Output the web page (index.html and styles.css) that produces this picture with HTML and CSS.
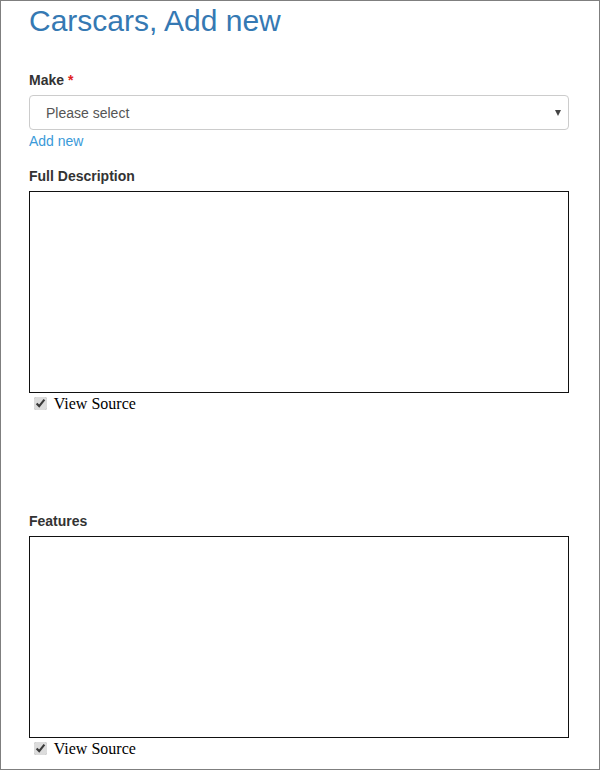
FILE: index.html
```html
<!DOCTYPE html>
<html lang="en">
<head>
    <meta charset="UTF-8">
    <meta name="viewport" content="width=device-width, initial-scale=1.0">
    <title>Carscars, Add new</title>
    <link rel="stylesheet" href="styles.css">
</head>
<body>
    <div class="page">
        <h1>Carscars, Add new</h1>
        <form class="edit-form">
            <div class="form-group">
                <label for="make">Make <span class="required">*</span></label>
                <div class="select-wrap">
                    <select id="make" class="form-control">
                        <option>Please select</option>
                    </select>
                </div>
                <a href="#" class="add-link">Add new</a>
            </div>
            <div class="form-group editor">
                <label for="full-description">Full Description</label>
                <textarea id="full-description" class="source-area"></textarea>
                <div class="view-source">
                    <input type="checkbox" checked> View Source
                </div>
            </div>
            <div class="form-group editor">
                <label for="features">Features</label>
                <textarea id="features" class="source-area"></textarea>
                <div class="view-source">
                    <input type="checkbox" checked> View Source
                </div>
            </div>
        </form>
    </div>
</body>
</html>
```

FILE: styles.css
```css
html, body {
    margin: 0;
    padding: 0;
}
body {
    font-family: "Liberation Sans", Arial, sans-serif;
    font-size: 14px;
    line-height: 20px;
    color: #333;
    background: #fff;
}
.page {
    box-sizing: border-box;
    width: 600px;
    height: 770px;
    border: 1px solid #7f7f7f;
    padding: 0 30px 0 28px;
    overflow: hidden;
}
h1 {
    font-size: 30px;
    font-weight: normal;
    line-height: 33px;
    color: #3579b3;
    margin: 3px 0 33px;
}
.form-group {
    margin-bottom: 15px;
}
label {
    display: block;
    font-weight: bold;
    margin-bottom: 5px;
}
.required {
    color: #e02020;
}
.select-wrap {
    position: relative;
}
.select-wrap::after {
    content: "";
    position: absolute;
    right: 8px;
    top: 15px;
    border-left: 3.5px solid transparent;
    border-right: 3.5px solid transparent;
    border-top: 6px solid #444;
}
.form-control {
    display: block;
    box-sizing: border-box;
    width: 540px;
    height: 35px;
    padding: 6px 16px;
    font-family: inherit;
    font-size: 14px;
    color: #555;
    background: #fff;
    border: 1px solid #ccc;
    border-radius: 4px;
    appearance: none;
    -webkit-appearance: none;
}
.add-link {
    display: block;
    color: #3a9ad9;
    text-decoration: none;
    margin-top: 1px;
}
.source-area {
    display: block;
    box-sizing: border-box;
    width: 540px;
    height: 202px;
    margin: 0;
    border: 1px solid #111;
    resize: none;
}
.view-source {
    font-family: "Liberation Serif", "Times New Roman", serif;
    font-size: 16px;
    line-height: 20px;
    color: #000;
    margin-top: 1px;
}
.view-source input {
    margin: 0 3px 0 5px;
    vertical-align: -1px;
    accent-color: #dcdcdc;
}
.editor {
    margin-bottom: 0;
}
.editor + .editor {
    margin-top: 97px;
}
```
